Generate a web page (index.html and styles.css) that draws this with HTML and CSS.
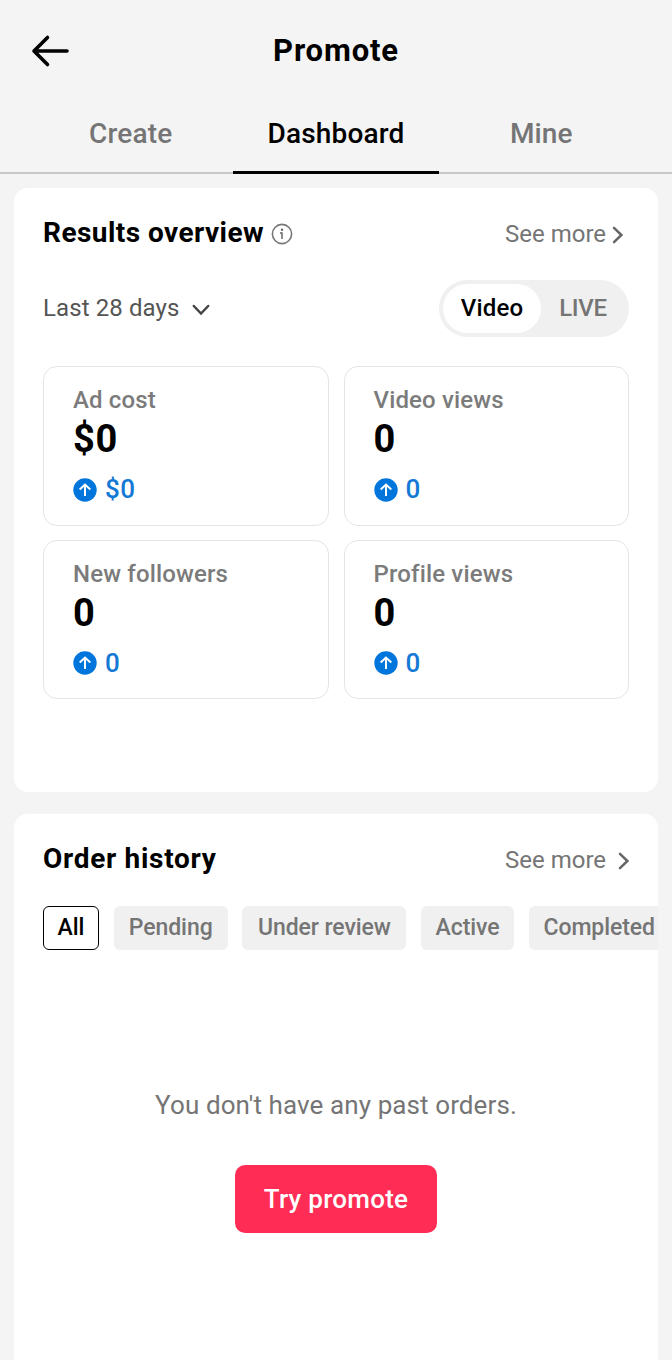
FILE: index.html
```html
<!DOCTYPE html>
<html lang="en">
<head>
<meta charset="utf-8">
<title>Promote</title>
<link rel="stylesheet" href="styles.css">
</head>
<body>
<svg class="defs" width="0" height="0" aria-hidden="true">
  <symbol id="up" viewBox="0 0 24 24">
    <circle cx="12" cy="12" r="11.7" fill="#0075dc"/>
    <path d="M12 18V7M6.700 11.600L12 6.600l5.300 5" fill="none" stroke="#fff" stroke-width="2"/>
  </symbol>
  <symbol id="chevron" viewBox="0 0 12 18">
    <path d="M2 1.800L9.400 9 2 16.200" fill="none" stroke="currentColor" stroke-width="2.500" stroke-linecap="round"/>
  </symbol>
</svg>
<header class="header">
  <svg class="back" viewBox="0 0 40 34"><path d="M17.500 3.500L4 17l13.500 13.500M4.500 17h32.500" fill="none" stroke="#000" stroke-width="3.600" stroke-linecap="round" stroke-linejoin="round"/></svg>
  <h1 class="title">Promote</h1>
</header>
<nav class="tabs">
  <a class="tab">Create</a>
  <a class="tab active">Dashboard</a>
  <a class="tab">Mine</a>
</nav>
<main>
  <section class="card results">
    <div class="card-head">
      <h2 class="heading overview">Results overview</h2>
      <svg class="info" viewBox="0 0 22 22"><circle cx="11" cy="11" r="9.600" fill="none" stroke="#777" stroke-width="1.600"/><circle cx="11" cy="6.800" r="1.200" fill="#666"/><path d="M9 10h2v6" fill="none" stroke="#666" stroke-width="1.500"/></svg>
      <a class="more">See more<svg class="chev near"><use href="#chevron"/></svg></a>
    </div>
    <div class="filters">
      <span class="range">Last 28 days</span>
      <svg class="down" viewBox="0 0 18 12"><path d="M1.800 2L9 9.500 16.200 2" fill="none" stroke="#444" stroke-width="2.500" stroke-linecap="round"/></svg>
      <div class="switch"><span class="option on">Video</span><span class="option live">LIVE</span></div>
    </div>
    <div class="stats">
      <div class="stat"><div class="label">Ad cost</div><div class="value">$0</div><div class="delta"><svg class="up"><use href="#up"/></svg>$0</div></div>
      <div class="stat"><div class="label">Video views</div><div class="value">0</div><div class="delta"><svg class="up"><use href="#up"/></svg>0</div></div>
      <div class="stat"><div class="label">New followers</div><div class="value">0</div><div class="delta"><svg class="up"><use href="#up"/></svg>0</div></div>
      <div class="stat"><div class="label">Profile views</div><div class="value">0</div><div class="delta"><svg class="up"><use href="#up"/></svg>0</div></div>
    </div>
  </section>
  <section class="card orders">
    <div class="card-head">
      <h2 class="heading history">Order history</h2>
      <a class="more">See more<svg class="chev far"><use href="#chevron"/></svg></a>
    </div>
    <div class="chips">
      <span class="chip selected">All</span>
      <span class="chip pending">Pending</span>
      <span class="chip review">Under review</span>
      <span class="chip running">Active</span>
      <span class="chip completed">Completed</span>
    </div>
    <p class="empty">You don't have any past orders.</p>
    <button class="cta">Try promote</button>
  </section>
</main>
</body>
</html>
```

FILE: styles.css
```css
* { box-sizing: border-box; }
body { margin: 0; height: 1360px; overflow: hidden; background: #f4f4f4; color: #000; font-family: Roboto, "Liberation Sans", sans-serif; }
svg { display: block; flex: none; }
.defs { position: absolute; }
h1, h2, p { margin: 0; }
.header { height: 100px; display: grid; grid-template-columns: 80px 1fr 80px; align-items: center; }
.back { width: 40px; height: 34px; margin-left: 30px; margin-top: 1px; }
.title { text-align: center; font-size: 31px; line-height: 40px; font-weight: 700; letter-spacing: 0.85px; padding-top: 2px; }
.tabs { height: 74px; display: flex; padding-left: 28px; padding-right: 28px; box-shadow: inset 0 -2px #c8c8c8; }
.tab { flex: 1; text-align: center; font-size: 28px; line-height: 68px; font-weight: 500; color: #757575; letter-spacing: 0.15px; }
.tab.active { color: #000; border-bottom: 3px solid #000; }
.card { background: #fff; margin: 0 14px; border-radius: 14px; padding: 0 29px; }
.results { margin-top: 14px; height: 604px; }
.card-head { height: 92px; display: flex; align-items: center; }
.heading { font-size: 28px; line-height: 40px; font-weight: 700; padding-bottom: 2px; }
.overview { letter-spacing: 0.45px; }
.history { letter-spacing: 0.7px; }
.info { width: 22px; height: 22px; margin-left: 7px; }
.more { margin-left: auto; display: flex; align-items: center; font-size: 24px; color: #757575; width: 124px; white-space: nowrap; }
.chev { width: 12px; height: 18px; color: #666; }
.near { margin-left: 6px; margin-top: 1px; }
.far { margin-left: 12px; margin-top: 2px; }
.filters { height: 57px; display: flex; align-items: center; }
.range { font-size: 24px; color: #555; letter-spacing: 0.1px; padding-bottom: 1px; }
.down { width: 18px; height: 12px; margin-left: 13px; margin-top: 2px; }
.switch { margin-left: auto; width: 190px; height: 57px; border-radius: 29px; background: #f0f0f0; padding: 4px; display: flex; }
.option { flex: 1; text-align: center; font-size: 24px; line-height: 49px; font-weight: 500; color: #757575; }
.option.on { flex: none; width: 98px; background: #fff; border-radius: 25px; color: #000; letter-spacing: 0.2px; }
.live { letter-spacing: -0.3px; }
.stats { display: grid; grid-template-columns: 1fr 1fr; gap: 14px 15px; margin-top: 29px; }
.stat { height: 159.500px; border: 1px solid #e4e4e4; border-radius: 14px; padding: 17px 29px; }
.label { font-size: 24px; line-height: 32px; font-weight: 500; color: #7b7b7b; white-space: nowrap; letter-spacing: 0.15px; }
.value { font-size: 38px; line-height: 46px; font-weight: 700; letter-spacing: 0.8px; }
.delta { display: flex; align-items: center; gap: 8px; margin-top: 9px; font-size: 26px; line-height: 36px; font-weight: 500; color: #1479d5; letter-spacing: 0.4px; }
.up { width: 24px; height: 24px; margin-top: 1px; }
.orders { margin-top: 22px; height: 560px; }
.chips { display: flex; gap: 14.700px; margin-right: -29px; overflow: hidden; }
.chip { flex: none; height: 44px; line-height: 43px; border-radius: 6px; background: #f0f0f0; color: #757575; font-size: 23px; font-weight: 500; text-align: center; letter-spacing: -0.07px; }
.chip.selected { width: 56px; border: 1px solid #000; background: #fff; color: #000; line-height: 41px; }
.pending { width: 114px; }
.review { width: 164px; }
.running { width: 93px; }
.completed { width: 141px; }
.empty { margin-top: 135px; text-align: center; font-size: 26px; line-height: 40px; color: #757575; letter-spacing: 0.1px; }
.cta { display: block; margin: 40px auto 0; width: 202px; height: 68px; border: 0; border-radius: 10px; background: #ff2c55; color: #fff; font-family: inherit; font-size: 26px; font-weight: 500; padding: 0; letter-spacing: 0.25px; }
```
